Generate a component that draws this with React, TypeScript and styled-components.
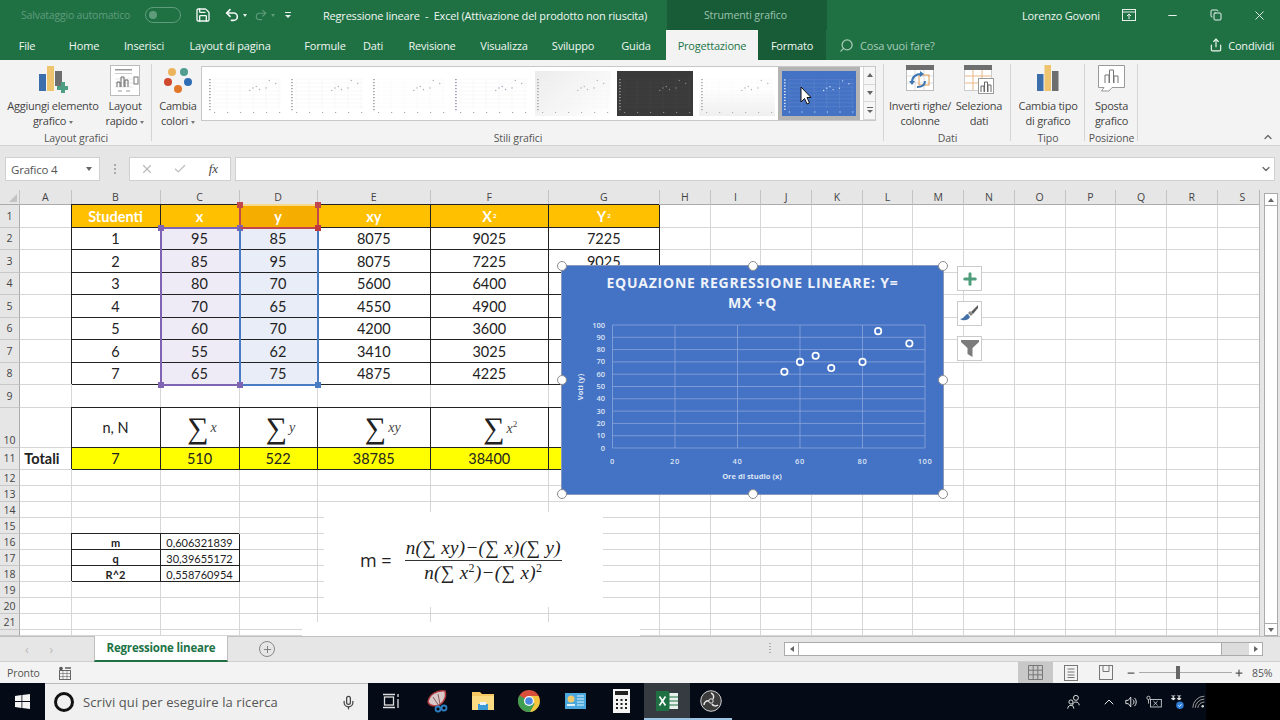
import React from 'react';
import styled, { createGlobalStyle } from 'styled-components';
import { Save, Undo2, Redo2, Search, Share, Minus, X, Copy, Check, ChevronDown, ChevronUp, Plus, Mic } from 'lucide-react';

const GlobalStyle = createGlobalStyle`
  html, body { margin: 0; padding: 0; background: #fff; }
  * { box-sizing: border-box; }
`;

const UI_FONT = '"Open Sans", "Liberation Sans", sans-serif';
const CELL_FONT = 'Lato, "Open Sans", sans-serif';
const GREEN = '#1f7144';
const GREEN_DARK = '#185b37';

const Window = styled.div`
  width: 1280px;
  height: 720px;
  overflow: hidden;
  display: flex;
  flex-direction: column;
  font-family: ${UI_FONT};
  font-size: 11.5px;
  color: #444;
`;

/* title bar */
const TitleBar = styled.div`
  height: 30px;
  flex: none;
  display: flex;
  align-items: stretch;
  background: ${GREEN};
  color: #f0f6f2;
`;
const QuickAccess = styled.div`
  width: 323px;
  flex: none;
  display: flex;
  align-items: center;
  padding-left: 21px;
`;
const AutoSave = styled.span`
  color: #5f9c7c;
  font-size: 10.5px;
  letter-spacing: -0.2px;
  width: 124px;
`;
const Toggle = styled.span`
  width: 36px;
  height: 16px;
  border: 1px solid #5f9c7c;
  border-radius: 8px;
  display: flex;
  align-items: center;
  padding-left: 3px;
  margin-right: 14px;
  &::before {
    content: '';
    width: 8px;
    height: 8px;
    border-radius: 50%;
    background: #5f9c7c;
  }
`;
const Caret = styled.span<{ $dim?: boolean }>`
  width: 0;
  height: 0;
  border-left: 2.5px solid transparent;
  border-right: 2.5px solid transparent;
  border-top: 3px solid ${({ $dim }) => ($dim ? '#5f9c7c' : '#e8f0ec')};
  margin: 0 7px 0 3px;
`;
const QuickIcon = styled.span<{ $dim?: boolean; $gap?: number }>`
  display: flex;
  color: ${({ $dim }) => ($dim ? '#5f9c7c' : '#f4f8f6')};
  margin-right: ${({ $gap }) => $gap ?? 0}px;
`;
const MoreLines = styled.span<{ $color?: string }>`
  width: 6px;
  height: 7px;
  margin-left: ${({ $color }) => ($color ? 0 : 3)}px;
  border-top: 1px solid ${({ $color }) => $color ?? '#e8f0ec'};
  &::after {
    content: '';
    display: block;
    margin-top: 2px;
    border-left: 3px solid transparent;
    border-right: 3px solid transparent;
    border-top: 3px solid ${({ $color }) => $color ?? '#e8f0ec'};
  }
`;
const DocTitle = styled.div`
  width: 344px;
  flex: none;
  display: flex;
  align-items: center;
  white-space: pre;
  font-size: 11px;
  letter-spacing: -0.2px;
`;
const ContextLabel = styled.div`
  width: 160px;
  flex: none;
  background: ${GREEN_DARK};
  color: #9cc4ae;
  display: flex;
  align-items: center;
  justify-content: center;
  font-size: 10.5px;
  letter-spacing: -0.1px;
  padding-right: 3px;
`;
const TitleRight = styled.div`
  flex: 1;
  display: flex;
  align-items: center;
  padding-left: 195px;
`;
const UserName = styled.span`
  width: 100px;
  font-size: 11px;
  letter-spacing: -0.2px;
`;
const WinBtn = styled.span<{ $ml?: number }>`
  width: 43.5px;
  margin-left: ${({ $ml }) => $ml ?? 0}px;
  display: flex;
  justify-content: center;
  color: #e8f0ec;
`;

/* tabs */
const TabRow = styled.div`
  height: 30px;
  flex: none;
  display: flex;
  align-items: stretch;
  background: ${GREEN};
  color: #f0f6f2;
`;
const Tab = styled.div<{ $w: number }>`
  width: ${({ $w }) => $w}px;
  flex: none;
  display: flex;
  align-items: center;
  justify-content: center;
  font-size: 11px;
  letter-spacing: -0.2px;
  padding-top: 1px;
`;
const ContextTabs = styled.div`
  width: 160px;
  margin-left: 14px;
  flex: none;
  display: flex;
  background: ${GREEN_DARK};
`;
const ActiveTab = styled(Tab)`
  background: #f3f3f3;
  color: #217346;
`;
const TellMe = styled.div`
  display: flex;
  align-items: center;
  gap: 6px;
  color: #a9cbb8;
  font-size: 11px;
  letter-spacing: -0.2px;
  padding-left: 13px;
  flex: 1;
`;
const ShareBox = styled.div`
  display: flex;
  align-items: center;
  gap: 5px;
  padding-right: 6px;
  font-size: 11px;
  letter-spacing: -0.2px;
`;

/* ribbon */
const Ribbon = styled.div`
  height: 86px;
  flex: none;
  display: flex;
  position: relative;
  background: #f3f3f3;
  border-bottom: 1px solid #d2d2d2;
`;
const RibbonGroup = styled.div<{ $w: number }>`
  width: ${({ $w }) => $w}px;
  flex: none;
  display: flex;
  flex-direction: column;
  position: relative;
  &::after {
    content: '';
    position: absolute;
    right: 0;
    top: 4px;
    bottom: 4px;
    width: 1px;
    background: #d4d4d4;
  }
`;
const GroupBody = styled.div`
  height: 72px;
  display: flex;
  align-items: flex-start;
`;
const GroupLabel = styled.div`
  text-align: center;
  font-size: 10.5px;
  line-height: 14px;
  color: #555;
  letter-spacing: -0.1px;
`;
const RibbonBtn = styled.div<{ $w: number; $ml?: number }>`
  width: ${({ $w }) => $w}px;
  margin-left: ${({ $ml }) => $ml ?? 0}px;
  flex: none;
  display: flex;
  flex-direction: column;
  align-items: center;
`;
const BtnIcon = styled.div`
  height: 38px;
  padding-top: 5px;
  display: flex;
  justify-content: center;
`;
const BtnLabel = styled.div`
  text-align: center;
  font-size: 11px;
  line-height: 15px;
  letter-spacing: -0.25px;
  color: #444;
  white-space: nowrap;
`;
const LabelCaret = styled.span`
  display: inline-block;
  vertical-align: middle;
  margin-left: 3px;
  border-left: 2.5px solid transparent;
  border-right: 2.5px solid transparent;
  border-top: 3px solid #777;
`;
const Gallery = styled.div`
  width: 675px;
  height: 55px;
  margin: 6px 0 0 1px;
  flex: none;
  display: flex;
  background: #fff;
  border: 1px solid #c8c8c8;
  padding: 0 0 0 2px;
`;
const ThumbRow = styled.div`
  flex: 1;
  display: flex;
  align-items: center;
`;
const Thumb = styled.div<{ $bg: string; $selected?: boolean }>`
  width: 82px;
  height: ${({ $selected }) => ($selected ? 53 : 45)}px;
  flex: none;
  padding: ${({ $selected }) => ($selected ? '4px' : '0 3px')};
  background: ${({ $selected }) => ($selected ? '#b4b4b4' : 'transparent')};
  svg {
    display: block;
    width: 100%;
    height: 100%;
    background: ${({ $bg }) => $bg};
  }
`;
const GalleryScroll = styled.div`
  width: 12px;
  flex: none;
  display: flex;
  flex-direction: column;
`;
const ScrollCell = styled.div`
  flex: 1;
  border-left: 1px solid #d8d8d8;
  border-bottom: 1px solid #d8d8d8;
  display: flex;
  align-items: center;
  justify-content: center;
  color: #666;
  background: #f6f6f6;
`;
const CollapseBtn = styled.span`
  position: absolute;
  right: 6px;
  bottom: 2px;
  color: #666;
  display: flex;
`;
const Pointer = styled.svg`
  position: absolute;
  left: 800px;
  top: 26px;
`;

/* formula bar */
const FormulaBar = styled.div`
  height: 44px;
  flex: none;
  background: #e6e6e6;
  display: flex;
  align-items: flex-start;
  padding: 11px 5px 0;
`;
const FieldBox = styled.div<{ $w?: number; $mr?: number }>`
  height: 24px;
  ${({ $w }) => ($w ? `width: ${$w}px; flex: none;` : 'flex: 1; justify-content: flex-end; padding-right: 2px;')}
  margin-right: ${({ $mr }) => $mr ?? 0}px;
  background: #fff;
  border: 1px solid #d0d0d0;
  display: flex;
  align-items: center;
`;
const NameText = styled.span`
  flex: 1;
  padding-left: 5px;
  font-size: 11.5px;
  letter-spacing: -0.2px;
  color: #555;
`;
const BarDots = styled.span`
  width: 29px;
  flex: none;
  display: flex;
  justify-content: center;
  padding-top: 7px;
  &::before {
    content: '';
    width: 2px;
    height: 10px;
    background: repeating-linear-gradient(#aaa 0 2px, transparent 2px 4px);
  }
`;
const FxSlot = styled.span<{ $w: number; $serif?: boolean }>`
  width: ${({ $w }) => $w}px;
  display: flex;
  justify-content: center;
  color: ${({ $serif }) => ($serif ? '#444' : '#bbb')};
  font: ${({ $serif }) => ($serif ? 'italic 13px "Liberation Serif", serif' : 'inherit')};
`;
const NameArrow = styled.span`
  width: 0;
  height: 0;
  margin-right: 7px;
  border-left: 3px solid transparent;
  border-right: 3px solid transparent;
  border-top: 4px solid #666;
`;

/* sheet */
const SheetArea = styled.div`
  height: 446px;
  flex: none;
  display: flex;
  background: #e6e6e6;
`;
const Sheet = styled.div`
  width: 1260px;
  height: 446px;
  flex: none;
  position: relative;
  overflow: hidden;
  background: #fff;
  border-right: 1px solid #b8b8b8;
  display: grid;
  grid-template-columns: 20px 51.5px 89px 79px 78px 113.5px 117.5px 111.5px repeat(12, 50.7px);
  grid-template-rows: 15px repeat(9, 22.5px) 40px 22.5px repeat(10, 16px) 6px;
`;
const Corner = styled.div`
  background: #e6e6e6;
  border-right: 1px solid #c4c4c4;
  border-bottom: 1px solid #ababab;
  position: relative;
  &::after {
    content: '';
    position: absolute;
    right: 2px;
    bottom: 2px;
    border-left: 8px solid transparent;
    border-bottom: 8px solid #c2c2c2;
  }
`;
const ColHead = styled.div`
  background: #e6e6e6;
  border-right: 1px solid #c4c4c4;
  border-bottom: 1px solid #ababab;
  display: flex;
  align-items: center;
  justify-content: center;
  font-size: 10.5px;
  color: #444;
`;
const RowHead = styled.div<{ $bottom?: boolean }>`
  background: #e6e6e6;
  border-right: 1px solid #ababab;
  border-bottom: 1px solid #c8c8c8;
  display: flex;
  align-items: ${({ $bottom }) => ($bottom ? 'flex-end' : 'center')};
  justify-content: center;
  font-size: 10.5px;
  color: #444;
  overflow: hidden;
`;

type CellKind = 'plain' | 'head' | 'headSel' | 'body' | 'bodyC' | 'bodyD' | 'formula' | 'total' | 'small' | 'smallBold' | 'side';

const cellFill: Record<CellKind, string> = {
  plain: '#fff',
  head: '#ffc000',
  headSel: '#f5ae00',
  body: '#fff',
  bodyC: '#eeebf6',
  bodyD: '#e8edf7',
  formula: '#fff',
  total: '#ffff00',
  small: '#fff',
  smallBold: '#fff',
  side: '#fff',
};

const Cell = styled.div<{ $kind: CellKind }>`
  background: ${({ $kind }) => cellFill[$kind]};
  font-family: ${CELL_FONT};
  color: ${({ $kind }) => ($kind === 'head' || $kind === 'headSel' ? '#fff' : '#222')};
  font-size: ${({ $kind }) => ($kind === 'small' || $kind === 'smallBold' ? 11 : 14.5)}px;
  font-weight: ${({ $kind }) => ($kind === 'head' || $kind === 'headSel' || $kind === 'smallBold' || $kind === 'side' ? 700 : 400)};
  display: flex;
  align-items: center;
  justify-content: center;
  padding-top: 1px;
  white-space: nowrap;
  min-width: 0;
  ${({ $kind }) =>
    $kind === 'plain'
      ? 'border-right: 1px solid #d6d6d6; border-bottom: 1px solid #d6d6d6;'
      : $kind === 'side'
        ? 'border-right: 1px solid #d6d6d6; border-bottom: 1px solid #d6d6d6; justify-content: flex-end; padding-right: 11px;'
        : 'border-right: 1px solid #222; border-bottom: 1px solid #222; box-shadow: -1px -1px 0 #222;'}
`;
const TinySup = styled.sup`
  font-size: 6px;
  line-height: 0;
  margin-left: 1px;
`;
const SumWrap = styled.span<{ $shift: number }>`
  display: flex;
  align-items: center;
  gap: 2px;
  margin-left: ${({ $shift }) => $shift}px;
  font-family: "Liberation Serif", serif;
  color: #222;
`;
const SumSign = styled.span`
  font-size: 30px;
  line-height: 1;
  font-weight: 400;
`;
const SumVar = styled.span`
  font-size: 14px;
  font-style: italic;
  color: #444;
  sup {
    font-size: 9px;
    font-style: normal;
  }
`;

const RangeBox = styled.div<{ $l: number; $t: number; $w: number; $h: number; $color: string; $topColor?: string }>`
  position: absolute;
  left: ${({ $l }) => $l}px;
  top: ${({ $t }) => $t}px;
  width: ${({ $w }) => $w}px;
  height: ${({ $h }) => $h}px;
  border: 2px solid ${({ $color }) => $color};
  ${({ $topColor }) => ($topColor ? `border-top-color: ${$topColor};` : '')}
  pointer-events: none;
`;
const RangeDot = styled.span<{ $x: 'l' | 'r'; $y: 't' | 'b'; $color: string }>`
  position: absolute;
  width: 6px;
  height: 6px;
  background: ${({ $color }) => $color};
  ${({ $x }) => ($x === 'l' ? 'left: -4px;' : 'right: -4px;')}
  ${({ $y }) => ($y === 't' ? 'top: -4px;' : 'bottom: -4px;')}
`;

const EquationBox = styled.div`
  position: absolute;
  left: 324px;
  top: 322px;
  width: 279px;
  height: 95px;
  background: #fff;
  display: flex;
  align-items: center;
  padding: 0 0 0 36px;
  gap: 13px;
  color: #222;
`;
const EquationTail = styled.div`
  position: absolute;
  left: 302px;
  top: 432px;
  width: 338px;
  height: 14px;
  background: #fff;
`;
const EqLead = styled.span`
  font-size: 18px;
  line-height: 1;
  white-space: pre;
`;
const Fraction = styled.div`
  display: flex;
  flex-direction: column;
  align-items: center;
  font: italic 19px/23px "Liberation Serif", "DejaVu Serif", serif;
  letter-spacing: 0.35px;
  white-space: pre;
`;
const Numerator = styled.div`
  border-bottom: 1.5px solid #333;
  padding: 0 1px 1px;
`;
const Denominator = styled.div`
  sup {
    font-size: 12px;
    line-height: 0;
    font-style: normal;
  }
`;

const ChartBox = styled.div`
  position: absolute;
  left: 562px;
  top: 76px;
  width: 381px;
  height: 228px;
  background: #4472c4;
  box-shadow: 0 0 0 1px #8a9ab8;
`;
const ChartTitle = styled.div`
  height: 48px;
  padding-top: 7px;
  text-align: center;
  color: #eef2fa;
  font: 700 14px/20px ${UI_FONT};
  letter-spacing: 0.75px;
`;
const ChartSvg = styled.svg`
  display: block;
  text {
    font-family: ${UI_FONT};
    fill: #dbe4f5;
  }
`;
const ChartHandle = styled.span<{ $x: number; $y: number }>`
  position: absolute;
  left: ${({ $x }) => $x}%;
  top: ${({ $y }) => $y}%;
  width: 10px;
  height: 10px;
  margin: -5px 0 0 -5px;
  border-radius: 50%;
  background: #fff;
  border: 1.5px solid #8c8c8c;
`;
const ChartTools = styled.div`
  position: absolute;
  left: 957px;
  top: 76px;
  display: flex;
  flex-direction: column;
  gap: 10px;
`;
const ToolBtn = styled.div`
  width: 25px;
  height: 25px;
  background: #fff;
  border: 1px solid #cbcbcb;
  display: flex;
  align-items: center;
  justify-content: center;
`;

const VScroll = styled.div`
  flex: 1;
  display: flex;
  flex-direction: column;
  padding: 3px 2px 0 4px;
`;
const ScrollBtn = styled.div`
  height: 13px;
  flex: none;
  background: #fff;
  border: 1px solid #ababab;
  display: flex;
  align-items: center;
  justify-content: center;
`;
const ScrollThumb = styled.div`
  flex: 1;
  background: #fff;
  border-left: 1px solid #ababab;
  border-right: 1px solid #ababab;
`;
const Arrow = styled.span<{ $dir: 'up' | 'down' | 'left' | 'right' }>`
  width: 0;
  height: 0;
  ${({ $dir }) =>
    $dir === 'up'
      ? 'border-left: 3px solid transparent; border-right: 3px solid transparent; border-bottom: 4px solid #666;'
      : $dir === 'down'
        ? 'border-left: 3px solid transparent; border-right: 3px solid transparent; border-top: 4px solid #666;'
        : $dir === 'left'
          ? 'border-top: 3px solid transparent; border-bottom: 3px solid transparent; border-right: 4px solid #666;'
          : 'border-top: 3px solid transparent; border-bottom: 3px solid transparent; border-left: 4px solid #666;'}
`;

/* sheet tabs */
const SheetTabs = styled.div`
  height: 26px;
  flex: none;
  background: #e6e6e6;
  border-top: 1px solid #c0c0c0;
  border-bottom: 1px solid #cfcfcf;
  display: flex;
  align-items: center;
`;
const NavArrows = styled.div`
  width: 94px;
  flex: none;
  display: flex;
  gap: 21px;
  padding-left: 25px;
  color: #b8b8b8;
  font-size: 12px;
`;
const SheetTab = styled.div`
  width: 134px;
  height: 26px;
  margin-top: -1px;
  flex: none;
  background: #fff;
  border-bottom: 2px solid ${GREEN};
  border-left: 1px solid #c0c0c0;
  border-right: 1px solid #c0c0c0;
  display: flex;
  align-items: center;
  justify-content: center;
  color: #217346;
  font-weight: 700;
  font-size: 11.5px;
  letter-spacing: -0.2px;
`;
const AddSheet = styled.div`
  width: 16px;
  height: 16px;
  margin-left: 31px;
  flex: none;
  border-radius: 50%;
  border: 1px solid #888;
  display: flex;
  align-items: center;
  justify-content: center;
  color: #777;
`;
const TabSplitter = styled.div`
  margin-left: 494px;
  width: 2px;
  height: 12px;
  flex: none;
  background: repeating-linear-gradient(#aaa 0 1px, transparent 1px 3px);
`;
const HScroll = styled.div`
  margin-left: 13px;
  width: 479px;
  height: 14px;
  flex: none;
  display: flex;
  background: #dcdcdc;
  border: 1px solid #ababab;
`;
const HBtn = styled.div`
  width: 13px;
  flex: none;
  background: #fff;
  display: flex;
  align-items: center;
  justify-content: center;
`;
const HThumb = styled.div`
  width: 424px;
  flex: none;
  background: #fff;
  border-left: 1px solid #ababab;
  border-right: 1px solid #ababab;
`;
const HTrack = styled.div`
  flex: 1;
`;

/* status bar */
const StatusBar = styled.div`
  height: 21px;
  flex: none;
  background: #f3f3f3;
  display: flex;
  align-items: center;
  padding-left: 7px;
  font-size: 10.5px;
  letter-spacing: -0.1px;
  color: #555;
`;
const ReadyText = styled.span`
  width: 51px;
  flex: none;
`;
const ViewBtn = styled.div<{ $on?: boolean; $ml?: number }>`
  width: 35px;
  height: 21px;
  flex: none;
  margin-left: ${({ $ml }) => $ml ?? 0}px;
  background: ${({ $on }) => ($on ? '#c8c8c8' : 'transparent')};
  display: flex;
  align-items: center;
  justify-content: center;
`;
const ZoomGlyph = styled.span<{ $ml: number }>`
  margin-left: ${({ $ml }) => $ml}px;
  display: flex;
  color: #555;
`;
const ZoomTrack = styled.div`
  width: 93px;
  height: 1px;
  margin-left: 3px;
  flex: none;
  background: #aaa;
  position: relative;
`;
const ZoomThumb = styled.span`
  position: absolute;
  left: 37px;
  top: -6px;
  width: 4px;
  height: 13px;
  background: #666;
`;
const ZoomText = styled.span`
  margin-left: 8px;
`;

/* taskbar */
const Taskbar = styled.div`
  height: 37px;
  flex: none;
  background: #040b16;
  display: flex;
  align-items: stretch;
  color: #e8e8e8;
`;
const StartBtn = styled.div`
  width: 45px;
  flex: none;
  display: flex;
  align-items: center;
  justify-content: center;
`;
const SearchBox = styled.div`
  width: 323px;
  flex: none;
  background: #f0f0f0;
  border-top: 1px solid #bbb;
  display: flex;
  align-items: center;
  padding: 0 12px 0 9px;
  color: #555;
  font-size: 13px;
  letter-spacing: 0.1px;
`;
const Cortana = styled.span`
  width: 20px;
  height: 20px;
  margin-right: 9px;
  border: 3px solid #111;
  border-radius: 50%;
  flex: none;
`;
const SearchText = styled.span`
  flex: 1;
`;
const TaskIcon = styled.div<{ $w: number; $active?: boolean; $open?: boolean }>`
  width: ${({ $w }) => $w}px;
  flex: none;
  display: flex;
  align-items: center;
  justify-content: center;
  background: ${({ $active }) => ($active ? '#363b42' : 'transparent')};
  border-bottom: 2px solid ${({ $open }) => ($open ? '#9cc4e4' : 'transparent')};
`;
const Tray = styled.div`
  margin-left: 334px;
  width: 140px;
  flex: none;
  display: flex;
  align-items: center;
  gap: 8px;
`;
const TrayChevron = styled.span`
  margin-left: 12px;
  display: flex;
`;
const TrayEnd = styled.div`
  flex: 1;
  background: #000;
`;
const MirrorSearch = styled.span`
  display: flex;
  transform: scaleX(-1);
`;

const COLS = ['A', 'B', 'C', 'D', 'E', 'F', 'G', 'H', 'I', 'J', 'K', 'L', 'M', 'N', 'O', 'P', 'Q', 'R', 'S'];
const ROWS = Array.from({ length: 22 }, (_, i) => i + 1);

const students = [
  [1, 95, 85, 8075, 9025, 7225],
  [2, 85, 95, 8075, 7225, 9025],
  [3, 80, 70, 5600, 6400, null],
  [4, 70, 65, 4550, 4900, null],
  [5, 60, 70, 4200, 3600, null],
  [6, 55, 62, 3410, 3025, null],
  [7, 65, 75, 4875, 4225, null],
];

const points = [
  [95, 85],
  [85, 95],
  [80, 70],
  [70, 65],
  [60, 70],
  [55, 62],
  [65, 75],
];

type CellDef = { kind: CellKind; content?: React.ReactNode };

const Sum = ({ v, shift }: { v: React.ReactNode; shift: number }) => (
  <SumWrap $shift={shift}>
    <SumSign>∑</SumSign>
    <SumVar>{v}</SumVar>
  </SumWrap>
);

function buildCells() {
  const cells: Record<string, CellDef> = {
    B1: { kind: 'head', content: 'Studenti' },
    C1: { kind: 'head', content: 'x' },
    D1: { kind: 'headSel', content: 'y' },
    E1: { kind: 'head', content: 'xy' },
    F1: { kind: 'head', content: <>X<TinySup>2</TinySup></> },
    G1: { kind: 'head', content: <>Y<TinySup>2</TinySup></> },
    B10: { kind: 'formula', content: 'n, N' },
    C10: { kind: 'formula', content: <Sum v="x" shift={5} /> },
    D10: { kind: 'formula', content: <Sum v="y" shift={5} /> },
    E10: { kind: 'formula', content: <Sum v="xy" shift={18} /> },
    F10: { kind: 'formula', content: <Sum v={<>x<sup>2</sup></>} shift={22} /> },
    G10: { kind: 'formula' },
    A11: { kind: 'side', content: 'Totali' },
    B11: { kind: 'total', content: 7 },
    C11: { kind: 'total', content: 510 },
    D11: { kind: 'total', content: 522 },
    E11: { kind: 'total', content: 38785 },
    F11: { kind: 'total', content: 38400 },
    G11: { kind: 'total' },
    B16: { kind: 'smallBold', content: 'm' },
    C16: { kind: 'small', content: '0,606321839' },
    B17: { kind: 'smallBold', content: 'q' },
    C17: { kind: 'small', content: '30,39655172' },
    B18: { kind: 'smallBold', content: 'R^2' },
    C18: { kind: 'small', content: '0,558760954' },
  };
  students.forEach((row, i) => {
    const r = i + 2;
    cells[`B${r}`] = { kind: 'body', content: row[0] };
    cells[`C${r}`] = { kind: 'bodyC', content: row[1] };
    cells[`D${r}`] = { kind: 'bodyD', content: row[2] };
    cells[`E${r}`] = { kind: 'body', content: row[3] };
    cells[`F${r}`] = { kind: 'body', content: row[4] };
    cells[`G${r}`] = { kind: 'body', content: row[5] };
  });
  return cells;
}

const MiniChart = ({ dot, grid }: { dot: string; grid: string }) => (
  <svg viewBox="0 0 76 45">
    {[8, 12, 16, 20, 24, 28, 32, 36].map((y) => (
      <line key={y} x1="7" x2="74" y1={y} y2={y} stroke={grid} strokeWidth="0.4" />
    ))}
    {[7, 20, 33, 46, 59, 72].map((x) => (
      <React.Fragment key={x}>
        <line x1={x} x2={x} y1="8" y2="38" stroke={grid} strokeWidth="0.4" />
        <rect x={x} y="41" width="1.2" height="1" fill={dot} />
      </React.Fragment>
    ))}
    {[8, 11, 14, 17, 20, 23, 26, 29, 32, 35, 38].map((y) => (
      <rect key={y} x="2" y={y} width="1.8" height="1.2" fill={dot} />
    ))}
    {points.map(([x, y]) => (
      <circle key={`${x}-${y}`} cx={7 + x * 0.65} cy={38 - y * 0.3} r="0.7" fill={dot} />
    ))}
  </svg>
);

const thumbs = [
  { bg: '#fff', dot: '#a8a8a8', grid: '#f0f0f0' },
  { bg: '#fff', dot: '#a8a8a8', grid: '#f0f0f0' },
  { bg: '#fff', dot: '#a8a8a8', grid: '#f4f4f4' },
  { bg: '#fff', dot: '#a0a0b8', grid: '#f0f0f0' },
  { bg: 'linear-gradient(135deg, #ececec, #fff)', dot: '#b0b0b0', grid: '#f4f4f4' },
  { bg: '#3a3a3a', dot: '#8a8a8a', grid: '#484848' },
  { bg: 'linear-gradient(0deg, #efefef, #fff 60%)', dot: '#b0b0b0', grid: '#f4f4f4' },
  { bg: '#4472c4', dot: '#dfe8f8', grid: '#6a8fd0', selected: true },
];

const AddElementIcon = () => (
  <svg width="30" height="28" viewBox="0 0 30 28">
    <rect x="1" y="9" width="7" height="17" fill="#3c6eab" />
    <rect x="9" y="1" width="7" height="25" fill="#eec46f" />
    <rect x="17" y="6" width="7" height="15" fill="#6e6e6e" />
    <path d="M19 21h4v-4h4v4h3v4h-3v3h-4v-3h-4z" fill="#4f9d83" />
  </svg>
);
const QuickLayoutIcon = () => (
  <svg width="30" height="31" viewBox="0 0 30 31" fill="none">
    <rect x=".5" y=".5" width="29" height="30" fill="#fff" stroke="#bbb" />
    <rect x="5" y="4" width="17" height="1.5" fill="#999" />
    <rect x="5" y="8" width="17" height="1" fill="#ccc" />
    <path d="M5 22h18M5 14h18M5 18h18" stroke="#ddd" strokeWidth=".7" />
    <path d="M7 22v-5h3v5M11 22V12h3v10M15 22v-7h3v7" stroke="#666" />
    <rect x="24" y="12" width="4" height="7" stroke="#777" />
    <path d="M8 26h4M16 26h4" stroke="#999" />
  </svg>
);
const ColorsIcon = () => (
  <svg width="30" height="30" viewBox="0 0 30 30">
    <circle cx="9" cy="7" r="4" fill="#ecb55c" />
    <circle cx="21" cy="7" r="4" fill="#4f9e8f" />
    <circle cx="5" cy="17" r="4" fill="#d0492f" />
    <circle cx="25" cy="17" r="4" fill="#2f6eb5" />
    <circle cx="15" cy="24" r="4" fill="#e2762a" />
  </svg>
);
const SwitchIcon = () => (
  <svg width="28" height="26" viewBox="0 0 28 26" fill="none">
    <rect x=".5" y=".5" width="27" height="25" fill="#fff" stroke="#bbb" />
    <rect x="0" y="0" width="28" height="5" fill="#6e6e6e" />
    <path d="M1 11h26M1 18h26M9 5v20M18 5v20" stroke="#ddd" />
    <rect x="13" y="10" width="10" height="10" stroke="#e29a4f" />
    <path d="M6 17c0-5 4-8 9-8" stroke="#3c78b5" strokeWidth="2" />
    <path d="M14 6l4 3-4 3zM3 16h6l-3 4z" fill="#3c78b5" />
    <path d="M19 16c0 4-3 6-8 6" stroke="#3c78b5" strokeWidth="2" />
  </svg>
);
const SelectDataIcon = () => (
  <svg width="30" height="29" viewBox="0 0 30 29" fill="none">
    <rect x=".5" y=".5" width="27" height="25" fill="#fff" stroke="#ccc" />
    <rect x="0" y="0" width="28" height="5" fill="#6e6e6e" />
    <path d="M1 11h26M1 18h26M9 5v20M18 5v20" stroke="#e7b887" />
    <rect x="14.5" y="13.5" width="15" height="15" fill="#fff" stroke="#999" />
    <path d="M17 27v-6h3v6M20.500 27V17h3v10M24 27v-7h3v7" stroke="#666" />
  </svg>
);
const ChangeTypeIcon = () => (
  <svg width="22" height="26" viewBox="0 0 22 26">
    <rect x="0" y="9" width="6.500" height="17" fill="#3c6eab" />
    <rect x="7.500" y="0" width="6.500" height="26" fill="#eec46f" />
    <rect x="15" y="6" width="6.500" height="20" fill="#6e6e6e" />
  </svg>
);
const MoveIcon = () => (
  <svg width="27" height="27" viewBox="0 0 27 27" fill="none">
    <path d="M.5.500h26v22H14l-3 3.500H3.500L6 22.500H.5z" fill="#fff" stroke="#999" />
    <path d="M7 18V10h4v8M11.500 18V5h4v13M16 18v-7h4v7" stroke="#777" />
  </svg>
);
const WindowsLogo = () => (
  <svg width="15" height="15" viewBox="0 0 15 15" fill="#f4f4f4">
    <path d="M0 2l6.500-1v6H0zM7.300.9L15 0v7H7.300zM0 8h6.500v6L0 13zM7.300 8H15v7l-7.700-1z" />
  </svg>
);
const TaskViewIcon = () => (
  <svg width="18" height="16" viewBox="0 0 18 16" fill="none" stroke="#ddd" strokeWidth="1.300">
    <rect x="2.500" y="4" width="9" height="8" />
    <path d="M1 1.500h12M1 14.500h12M16 1v3M16 6v9" />
  </svg>
);
const SnipIcon = () => (
  <svg width="24" height="24" viewBox="0 0 24 24" fill="none">
    <path d="M3 13C4 6 11 1 20 2c2 6-2 14-9 15-4 0-7-1-8-4z" fill="#d8c8c8" stroke="#b0383c" strokeWidth="1.500" />
    <path d="M8 8l6 9M13 5l2 10" stroke="#8a5a5a" />
    <circle cx="13" cy="20" r="2.500" stroke="#2d7fc0" strokeWidth="1.800" />
    <circle cx="19" cy="19" r="2.500" stroke="#2d7fc0" strokeWidth="1.800" />
  </svg>
);
const FolderIcon = () => (
  <svg width="22" height="20" viewBox="0 0 22 20">
    <path d="M0 1h8l2 2h12v16H0z" fill="#f5c95f" />
    <rect x="0" y="5" width="22" height="14" fill="#fbdc82" />
    <rect x="6" y="13" width="10" height="6" fill="#3c9bd6" />
    <rect x="8" y="11" width="6" height="3" fill="#eaf4fb" />
  </svg>
);
const ChromeIcon = () => (
  <svg width="22" height="22" viewBox="0 0 22 22">
    <circle cx="11" cy="11" r="11" fill="#d94f3d" />
    <path d="M11 11L1.500 16.500A11 11 0 0 1 1.500 5.500z" fill="#3f9e52" />
    <path d="M11 22A11 11 0 0 1 1.500 16.500L6 9l5 2 5.500-.5L22 11A11 11 0 0 1 11 22z" fill="#3f9e52" />
    <path d="M11 6h9.500A11 11 0 0 1 12 22l4.500-8z" fill="#f4c63d" />
    <circle cx="11" cy="11" r="5" fill="#fff" />
    <circle cx="11" cy="11" r="3.800" fill="#4a87e0" />
  </svg>
);
const PanelIcon = () => (
  <svg width="21" height="16" viewBox="0 0 21 16">
    <rect width="21" height="16" fill="#4aa8de" />
    <circle cx="6" cy="6" r="3.500" fill="#f1c96c" />
    <rect x="2" y="11" width="8" height="2" fill="#dff0fa" />
    <path d="M12 3h7M12 6h7M12 9h7M12 12h7" stroke="#dff0fa" />
  </svg>
);
const CalcIcon = () => (
  <svg width="17" height="24" viewBox="0 0 17 24">
    <rect width="17" height="24" fill="#f4f4f4" />
    <rect x="2" y="2" width="13" height="4" fill="#222" />
    <path d="M3 10h2v2H3zM7.500 10h2v2h-2zM12 10h2v2h-2zM3 14h2v2H3zM7.500 14h2v2h-2zM12 14h2v2h-2zM3 18h2v2H3zM7.500 18h2v2h-2zM12 18h2v2h-2z" fill="#222" />
  </svg>
);
const ExcelIcon = () => (
  <svg width="22" height="20" viewBox="0 0 22 20">
    <rect x="10" y="2" width="12" height="16" fill="#e8f2ec" />
    <path d="M13 2v16M13 6h9M13 10h9M13 14h9" stroke="#1f7144" />
    <rect x="0" y="0" width="13" height="20" fill="#1f7144" />
    <path d="M3.500 5.500l6 9M9.500 5.500l-6 9" stroke="#fff" strokeWidth="1.600" />
  </svg>
);
const ObsIcon = () => (
  <svg width="22" height="22" viewBox="0 0 22 22" fill="none">
    <circle cx="11" cy="11" r="10.300" fill="#3c3c3c" stroke="#cfcfcf" />
    <circle cx="11" cy="11" r="2.200" stroke="#e8e8e8" />
    <path d="M11 3a4 4 0 0 1 2 6M4 15a4 4 0 0 1 5-4M18 15a4 4 0 0 1-6-1" stroke="#e8e8e8" strokeWidth="1.500" />
  </svg>
);
const PeopleIcon = () => (
  <svg width="18" height="18" viewBox="0 0 18 18" fill="none" stroke="#ddd" strokeWidth="1.200">
    <circle cx="12" cy="4" r="3" />
    <path d="M8 13c.5-3 2-4 4-4s3.500 1 4 4" />
    <circle cx="6" cy="9" r="2.500" />
    <path d="M2 17c.5-3 2-4 4-4s3 1 3.500 4" />
  </svg>
);
const VolumeIcon = () => (
  <svg width="16" height="16" viewBox="0 0 16 16" fill="none" stroke="#ddd" strokeWidth="1.200">
    <path d="M1 6h3l3-4v12l-3-4H1zM9.500 5a4 4 0 0 1 0 6M11.500 3a7 7 0 0 1 0 10" />
  </svg>
);
const NetX = () => (
  <svg width="19" height="16" viewBox="0 0 19 16" fill="none" stroke="#ddd">
    <rect x="5.500" y="5" width="13" height="9" />
    <path d="M9 7l5 5M14 7l-5 5" />
    <circle cx="3" cy="3" r="2" />
    <path d="M3 5v5" />
  </svg>
);
const DropboxIcon = () => (
  <svg width="17" height="18" viewBox="0 0 17 18">
    <path d="M1 1l3 2-3 2 3 2 3-2-3-2 3-2zM8 1l3 2-3 2 3 2 3-2-3-2 3-2zM4 9l3-2" fill="#e8e8e8" />
    <circle cx="12" cy="13" r="4.500" fill="#2f7fd8" />
    <path d="M10 13l1.500 1.500L14 11.500" stroke="#fff" fill="none" />
  </svg>
);
const WifiIcon = () => (
  <svg width="17" height="16" viewBox="0 0 17 16" fill="none" stroke="#9a9a9a" strokeWidth="1.200">
    <path d="M1 15A14 14 0 0 1 15 1M4 15A11 11 0 0 1 15 4.500M7 15a8 8 0 0 1 8-7" />
    <circle cx="13" cy="13" r="1.500" fill="#ddd" stroke="none" />
  </svg>
);
const MacroIcon = () => (
  <svg width="14" height="14" viewBox="0 0 14 14" fill="none" stroke="#666">
    <rect x="1.500" y="4.500" width="11" height="9" />
    <path d="M1.500 7.500h11M1.500 10.500h11M5 4.500v9M9 4.500v9" strokeWidth=".6" />
    <circle cx="3" cy="2.500" r="1.800" fill="#555" stroke="none" />
    <path d="M7 2h6" strokeWidth="1.600" />
  </svg>
);
const ViewGrid = () => (
  <svg width="15" height="15" viewBox="0 0 15 15" fill="none" stroke="#777">
    <path d="M.5.500h14v14H.5zM5.200.500v14M9.800.500v14M.5 5.200h14M.5 9.800h14" />
  </svg>
);
const ViewPage = () => (
  <svg width="14" height="16" viewBox="0 0 14 16" fill="none" stroke="#777">
    <rect x=".5" y=".5" width="13" height="15" />
    <path d="M3.500 4h7M3.500 7h7M3.500 10h7M3.500 12.500h7" />
  </svg>
);
const ViewBreak = () => (
  <svg width="14" height="15" viewBox="0 0 14 15" fill="none" stroke="#777">
    <rect x=".5" y=".5" width="13" height="14" />
    <path d="M4 .5v6h6v-6" />
  </svg>
);
const BrushIcon = () => (
  <svg width="19" height="19" viewBox="0 0 19 19">
    <path d="M18 1l-7 7 2 2 5-6z" fill="#5a5a5a" />
    <path d="M10 7l3 3-2 2-3-3z" fill="#888" />
    <path d="M8 10c-2 0-3 2-4 3s-3 2-4 2c3 2 8 2 10-2z" fill="#4472a8" />
  </svg>
);
const FunnelIcon = () => (
  <svg width="18" height="17" viewBox="0 0 18 17">
    <path d="M0 0h18v2l-6.500 6v9l-5-3V8L0 2z" fill="#7c7c7c" />
  </svg>
);
const CursorIcon = () => (
  <Pointer width="12" height="19" viewBox="0 0 12 19">
    <path d="M1 1v15l3.500-3.500 2.500 5.500 2.500-1-2.500-5.500H11z" fill="#fff" stroke="#111" />
  </Pointer>
);

const Scatter = () => {
  const px = (x: number) => 50.5 + x * 3.125;
  const py = (y: number) => 134 - y * 1.23;
  const ys = [0, 10, 20, 30, 40, 50, 60, 70, 80, 90, 100];
  const xs = [0, 20, 40, 60, 80, 100];
  return (
    <ChartSvg width="381" height="180" viewBox="0 0 381 180">
      {ys.map((y) => (
        <React.Fragment key={y}>
          <line x1={px(0)} x2={px(100)} y1={py(y)} y2={py(y)} stroke="#8ba6da" strokeWidth="0.8" />
          <text x="43" y={py(y) + 2.500} textAnchor="end" fontSize="7.500" fontWeight="600">
            {y}
          </text>
        </React.Fragment>
      ))}
      {xs.map((x) => (
        <React.Fragment key={x}>
          <line x1={px(x)} x2={px(x)} y1={py(0)} y2={py(100)} stroke="#8ba6da" strokeWidth="0.8" />
          <text x={px(x)} y="150" textAnchor="middle" fontSize="7.500" fontWeight="600" letterSpacing="0.6">
            {x}
          </text>
        </React.Fragment>
      ))}
      {points.map(([x, y]) => (
        <circle key={`${x}-${y}`} cx={px(x)} cy={py(y)} r="3.200" fill="#4472c4" stroke="#fff" strokeWidth="1.700" />
      ))}
      <text x="190" y="165" textAnchor="middle" fontSize="7.500" fontWeight="700">
        Ore di studio (x)
      </text>
      <text x="0" y="0" textAnchor="middle" fontSize="7.500" fontWeight="700" transform="translate(21 73) rotate(-90)">
        Voti (y)
      </text>
    </ChartSvg>
  );
};

const handles = [
  [0, 0],
  [50, 0],
  [100, 0],
  [0, 50],
  [100, 50],
  [0, 100],
  [50, 100],
  [100, 100],
];

const App: React.FC = () => {
  const cells = buildCells();
  return (
    <Window>
      <GlobalStyle />
      <TitleBar>
        <QuickAccess>
          <AutoSave>Salvataggio automatico</AutoSave>
          <Toggle />
          <QuickIcon $gap={13}>
            <Save size={16} />
          </QuickIcon>
          <QuickIcon>
            <Undo2 size={16} strokeWidth={2.4} />
          </QuickIcon>
          <Caret />
          <QuickIcon $dim>
            <Redo2 size={14} />
          </QuickIcon>
          <Caret $dim />
          <MoreLines />
        </QuickAccess>
        <DocTitle>{'Regressione lineare  -  Excel (Attivazione del prodotto non riuscita)'}</DocTitle>
        <ContextLabel>Strumenti grafico</ContextLabel>
        <TitleRight>
          <UserName>Lorenzo Govoni</UserName>
          <svg width="14" height="12" viewBox="0 0 14 12" fill="none" stroke="#e8f0ec">
            <rect x=".5" y=".5" width="13" height="11" />
            <path d="M.5 3h13M7 10V5M5 7l2-2 2 2" />
          </svg>
          <WinBtn $ml={15}>
            <Minus size={13} />
          </WinBtn>
          <WinBtn>
            <Copy size={12} />
          </WinBtn>
          <WinBtn>
            <X size={15} strokeWidth={1.5} />
          </WinBtn>
        </TitleRight>
      </TitleBar>

      <TabRow>
        <Tab $w={54}>File</Tab>
        <Tab $w={60}>Home</Tab>
        <Tab $w={60}>Inserisci</Tab>
        <Tab $w={112}>Layout di pagina</Tab>
        <Tab $w={78}>Formule</Tab>
        <Tab $w={18}>Dati</Tab>
        <Tab $w={100}>Revisione</Tab>
        <Tab $w={44}>Visualizza</Tab>
        <Tab $w={94}>Sviluppo</Tab>
        <Tab $w={32}>Guida</Tab>
        <ContextTabs>
          <ActiveTab $w={92}>Progettazione</ActiveTab>
          <Tab $w={68}>Formato</Tab>
        </ContextTabs>
        <TellMe>
          <MirrorSearch>
            <Search size={15} />
          </MirrorSearch>
          Cosa vuoi fare?
        </TellMe>
        <ShareBox>
          <Share size={14} />
          Condividi
        </ShareBox>
      </TabRow>

      <Ribbon>
        <RibbonGroup $w={152}>
          <GroupBody>
            <RibbonBtn $w={96} $ml={5}>
              <BtnIcon>
                <AddElementIcon />
              </BtnIcon>
              <BtnLabel>
                Aggiungi elemento
                <br />
                grafico
                <LabelCaret />
              </BtnLabel>
            </RibbonBtn>
            <RibbonBtn $w={48}>
              <BtnIcon>
                <QuickLayoutIcon />
              </BtnIcon>
              <BtnLabel>
                Layout
                <br />
                rapido
                <LabelCaret />
              </BtnLabel>
            </RibbonBtn>
          </GroupBody>
          <GroupLabel>Layout grafici</GroupLabel>
        </RibbonGroup>
        <RibbonGroup $w={732}>
          <GroupBody>
            <RibbonBtn $w={44} $ml={4}>
              <BtnIcon>
                <ColorsIcon />
              </BtnIcon>
              <BtnLabel>
                Cambia
                <br />
                colori
                <LabelCaret />
              </BtnLabel>
            </RibbonBtn>
            <Gallery>
              <ThumbRow>
                {thumbs.map((t, i) => (
                  <Thumb key={i} $bg={t.bg} $selected={t.selected}>
                    <MiniChart dot={t.dot} grid={t.grid} />
                  </Thumb>
                ))}
              </ThumbRow>
              <GalleryScroll>
                <ScrollCell>
                  <Arrow $dir="up" />
                </ScrollCell>
                <ScrollCell>
                  <Arrow $dir="down" />
                </ScrollCell>
                <ScrollCell>
                  <MoreLines $color="#666" />
                </ScrollCell>
              </GalleryScroll>
            </Gallery>
          </GroupBody>
          <GroupLabel>Stili grafici</GroupLabel>
        </RibbonGroup>
        <RibbonGroup $w={127}>
          <GroupBody>
            <RibbonBtn $w={66} $ml={3}>
              <BtnIcon>
                <SwitchIcon />
              </BtnIcon>
              <BtnLabel>
                Inverti righe/
                <br />
                colonne
              </BtnLabel>
            </RibbonBtn>
            <RibbonBtn $w={52}>
              <BtnIcon>
                <SelectDataIcon />
              </BtnIcon>
              <BtnLabel>
                Seleziona
                <br />
                dati
              </BtnLabel>
            </RibbonBtn>
          </GroupBody>
          <GroupLabel>Dati</GroupLabel>
        </RibbonGroup>
        <RibbonGroup $w={74}>
          <GroupBody>
            <RibbonBtn $w={74}>
              <BtnIcon>
                <ChangeTypeIcon />
              </BtnIcon>
              <BtnLabel>
                Cambia tipo
                <br />
                di grafico
              </BtnLabel>
            </RibbonBtn>
          </GroupBody>
          <GroupLabel>Tipo</GroupLabel>
        </RibbonGroup>
        <RibbonGroup $w={53}>
          <GroupBody>
            <RibbonBtn $w={53}>
              <BtnIcon>
                <MoveIcon />
              </BtnIcon>
              <BtnLabel>
                Sposta
                <br />
                grafico
              </BtnLabel>
            </RibbonBtn>
          </GroupBody>
          <GroupLabel>Posizione</GroupLabel>
        </RibbonGroup>
        <CollapseBtn>
          <ChevronUp size={12} strokeWidth={2.5} />
        </CollapseBtn>
        <CursorIcon />
      </Ribbon>

      <FormulaBar>
        <FieldBox $w={95}>
          <NameText>Grafico 4</NameText>
          <NameArrow />
        </FieldBox>
        <BarDots />
        <FieldBox $w={102} $mr={4}>
          <FxSlot $w={34}>
            <X size={14} />
          </FxSlot>
          <FxSlot $w={34}>
            <Check size={14} />
          </FxSlot>
          <FxSlot $w={34} $serif>
            fx
          </FxSlot>
        </FieldBox>
        <FieldBox>
          <ChevronDown size={12} strokeWidth={2.5} color="#666" />
        </FieldBox>
      </FormulaBar>

      <SheetArea>
        <Sheet>
          <Corner />
          {COLS.map((c) => (
            <ColHead key={c}>{c}</ColHead>
          ))}
          {ROWS.map((r) => (
            <React.Fragment key={r}>
              <RowHead $bottom={r === 10}>{r < 22 ? r : ''}</RowHead>
              {COLS.map((c) => {
                const def = cells[`${c}${r}`];
                return (
                  <Cell key={c} $kind={def?.kind ?? 'plain'}>
                    {def?.content}
                  </Cell>
                );
              })}
            </React.Fragment>
          ))}

          <RangeBox $l={239} $t={14} $w={79.5} $h={24.5} $color="#c0484c" $topColor="#f8d88a">
            <RangeDot $x="l" $y="t" $color="#c0484c" />
            <RangeDot $x="r" $y="t" $color="#c0484c" />
          </RangeBox>
          <RangeBox $l={160} $t={37} $w={80.5} $h={159} $color="#8064b4">
            <RangeDot $x="l" $y="t" $color="#8064b4" />
            <RangeDot $x="r" $y="t" $color="#8064b4" />
            <RangeDot $x="l" $y="b" $color="#8064b4" />
            <RangeDot $x="r" $y="b" $color="#8064b4" />
          </RangeBox>
          <RangeBox $l={239} $t={37} $w={79.5} $h={159} $color="#4a7cc4" $topColor="#c0484c">
            <RangeDot $x="r" $y="t" $color="#c0383c" />
            <RangeDot $x="r" $y="b" $color="#4a7cc4" />
            <RangeDot $x="l" $y="b" $color="#8064b4" />
          </RangeBox>

          <EquationBox>
            <EqLead>m =</EqLead>
            <Fraction>
              <Numerator>n(∑ xy)−(∑ x)(∑ y)</Numerator>
              <Denominator>
                n(∑ x<sup>2</sup>)−(∑ x)<sup>2</sup>
              </Denominator>
            </Fraction>
          </EquationBox>
          <EquationTail />

          <ChartBox>
            <ChartTitle>
              EQUAZIONE REGRESSIONE LINEARE: Y=
              <br />
              MX +Q
            </ChartTitle>
            <Scatter />
            {handles.map(([x, y]) => (
              <ChartHandle key={`${x}-${y}`} $x={x} $y={y} />
            ))}
          </ChartBox>
          <ChartTools>
            <ToolBtn>
              <Plus size={18} strokeWidth={4} color="#4f9d7a" />
            </ToolBtn>
            <ToolBtn>
              <BrushIcon />
            </ToolBtn>
            <ToolBtn>
              <FunnelIcon />
            </ToolBtn>
          </ChartTools>
        </Sheet>
        <VScroll>
          <ScrollBtn>
            <Arrow $dir="up" />
          </ScrollBtn>
          <ScrollThumb />
          <ScrollBtn>
            <Arrow $dir="down" />
          </ScrollBtn>
        </VScroll>
      </SheetArea>

      <SheetTabs>
        <NavArrows>
          <span>‹</span>
          <span>›</span>
        </NavArrows>
        <SheetTab>Regressione lineare</SheetTab>
        <AddSheet>
          <Plus size={11} strokeWidth={2} />
        </AddSheet>
        <TabSplitter />
        <HScroll>
          <HBtn>
            <Arrow $dir="left" />
          </HBtn>
          <HThumb />
          <HTrack />
          <HBtn>
            <Arrow $dir="right" />
          </HBtn>
        </HScroll>
      </SheetTabs>

      <StatusBar>
        <ReadyText>Pronto</ReadyText>
        <MacroIcon />
        <ViewBtn $on $ml={946}>
          <ViewGrid />
        </ViewBtn>
        <ViewBtn>
          <ViewPage />
        </ViewBtn>
        <ViewBtn>
          <ViewBreak />
        </ViewBtn>
        <ZoomGlyph $ml={3}>
          <Minus size={10} strokeWidth={3} />
        </ZoomGlyph>
        <ZoomTrack>
          <ZoomThumb />
        </ZoomTrack>
        <ZoomGlyph $ml={2}>
          <Plus size={10} strokeWidth={3} />
        </ZoomGlyph>
        <ZoomText>85%</ZoomText>
      </StatusBar>

      <Taskbar>
        <StartBtn>
          <WindowsLogo />
        </StartBtn>
        <SearchBox>
          <Cortana />
          <SearchText>Scrivi qui per eseguire la ricerca</SearchText>
          <Mic size={15} color="#444" />
        </SearchBox>
        <TaskIcon $w={46}>
          <TaskViewIcon />
        </TaskIcon>
        <TaskIcon $w={46}>
          <SnipIcon />
        </TaskIcon>
        <TaskIcon $w={46}>
          <FolderIcon />
        </TaskIcon>
        <TaskIcon $w={46}>
          <ChromeIcon />
        </TaskIcon>
        <TaskIcon $w={46}>
          <PanelIcon />
        </TaskIcon>
        <TaskIcon $w={46}>
          <CalcIcon />
        </TaskIcon>
        <TaskIcon $w={46} $active $open>
          <ExcelIcon />
        </TaskIcon>
        <TaskIcon $w={42} $open>
          <ObsIcon />
        </TaskIcon>
        <Tray>
          <PeopleIcon />
          <TrayChevron>
            <ChevronUp size={16} strokeWidth={1.5} />
          </TrayChevron>
          <VolumeIcon />
          <NetX />
          <DropboxIcon />
          <WifiIcon />
        </Tray>
        <TrayEnd />
      </Taskbar>
    </Window>
  );
};

export default App;
